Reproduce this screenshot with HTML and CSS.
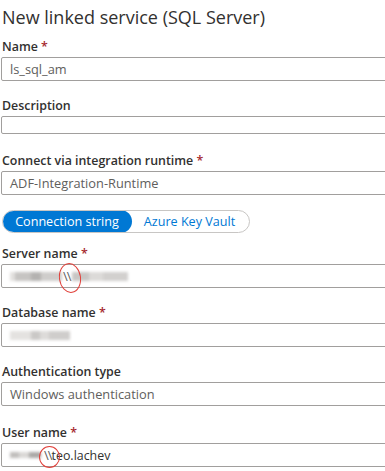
FILE: index.html
```html
<!DOCTYPE html>
<html>
<head>
<meta charset="utf-8">
<link rel="stylesheet" href="styles.css">
</head>
<body>
<div class="panel">
  <h1 class="title">New linked service (SQL Server)</h1>

  <div class="field">
    <div class="label">Name <span class="req">*</span></div>
    <div class="input"><span class="val">ls_sql_am</span></div>
  </div>

  <div class="field desc">
    <div class="label">Description</div>
    <div class="input short"></div>
  </div>

  <div class="field">
    <div class="label">Connect via integration runtime <span class="req">*</span></div>
    <div class="input"><span class="val">ADF-Integration-Runtime</span></div>
  </div>

  <div class="toggle">
    <div class="seg active">Connection string</div>
    <div class="seg">Azure Key Vault</div>
  </div>

  <div class="field">
    <div class="label">Server name <span class="req">*</span></div>
    <div class="input">
      <span class="blur b-srv1"></span><span class="slash srv-slash">\\</span><span class="blur b-srv2"></span>
      <span class="mark mark-srv"></span>
    </div>
  </div>

  <div class="field">
    <div class="label">Database name <span class="req">*</span></div>
    <div class="input">
      <span class="blur b-db"></span>
    </div>
  </div>

  <div class="field auth">
    <div class="label">Authentication type</div>
    <div class="input"><span class="val">Windows authentication</span></div>
  </div>

  <div class="field">
    <div class="label">User name <span class="req">*</span></div>
    <div class="input">
      <span class="blur b-usr"></span><span class="slash usr-slash">\\</span><span class="val usr-val">teo.lachev</span>
      <span class="mark mark-usr"></span>
    </div>
  </div>
</div>
</body>
</html>
```

FILE: styles.css
```css
html, body {
  margin: 0;
  padding: 0;
  background: #ffffff;
  overflow: hidden;
}
body {
  font-family: "Open Sans", "Noto Sans", "Liberation Sans", sans-serif;
  color: #323130;
  width: 385px;
  height: 471px;
}
.panel {
  padding: 5px 0 0 1px;
  display: flex;
  flex-direction: column;
  overflow: hidden;
}
.title {
  margin: 0 0 9px 1px;
  font-size: 18px;
  font-weight: 400;
  line-height: 24px;
  color: #323130;
}
.field {
  display: flex;
  flex-direction: column;
  margin-bottom: 16px;
}
.field.desc {
  margin-bottom: 18px;
}
.field.auth {
  margin-bottom: 18px;
}
.label {
  font-size: 12.4px;
  line-height: 18px;
  font-weight: 600;
  color: #323130;
  margin: 0 0 1px 1px;
}
.req {
  color: #a4262c;
  font-weight: 600;
}
.input {
  position: relative;
  box-sizing: border-box;
  width: 400px;
  height: 24px;
  border: 1px solid #a19f9d;
  border-radius: 2px;
  display: flex;
  align-items: center;
  padding-left: 8px;
  font-size: 12.8px;
  color: #605e5c;
}
.input.short {
  height: 18px;
}
.toggle {
  display: flex;
  width: 248px;
  height: 23px;
  box-sizing: border-box;
  margin: -1px 0 12px 1px;
  border: 1px solid #c8c6c4;
  border-radius: 12px;
  overflow: hidden;
}
.seg {
  display: flex;
  align-items: center;
  justify-content: center;
  font-size: 12.6px;
  color: #0078d4;
  flex: 0 0 auto;
}
.seg.active {
  width: 130px;
  background: #0078d4;
  color: #ffffff;
  border-radius: 12px;
  margin: -1px 0 -1px -1px;
}
.seg:not(.active) {
  flex: 1;
  padding-right: 2px;
}
.blur {
  display: inline-block;
  height: 9px;
  background: #c8c6c4;
  filter: blur(1.5px);
}
.b-srv1 {
  width: 52px;
  background: linear-gradient(90deg, #e2e0de 0 10%, #c6c4c2 10% 40%, #b4b2b0 40% 60%, #cfcdcb 60% 100%);
}
.b-srv2 {
  width: 56px;
  background: linear-gradient(90deg, #c8c6c4 0 30%, #dcdad8 30% 55%, #d2d0ce 55% 100%);
  margin-left: 1px;
}
.b-db {
  width: 60px;
  background: linear-gradient(90deg, #e4e2e0 0 35%, #cac8c6 35% 50%, #dddbd9 50% 65%, #cfcdcb 65% 100%);
}
.b-usr {
  width: 31px;
  height: 6px;
  background: linear-gradient(90deg, #c0bebc 0 30%, #dad8d6 30% 60%, #aaa8a6 60% 100%);
}
.slash {
  font-size: 13px;
  color: #605e5c;
  letter-spacing: -1px;
}
.srv-slash {
  margin-left: 1px;
}
.usr-slash {
  margin-left: 3px;
}
.usr-val {
  margin-left: 0;
  color: #323130;
  font-size: 12.4px;
}
.mark {
  position: absolute;
  border: 1px solid #e0403a;
  border-radius: 50%;
}
.mark-srv {
  left: 57px;
  top: -2px;
  width: 20px;
  height: 28px;
  transform: rotate(-8deg);
}
.mark-usr {
  left: 37px;
  top: 2px;
  width: 19px;
  height: 20px;
}
```
